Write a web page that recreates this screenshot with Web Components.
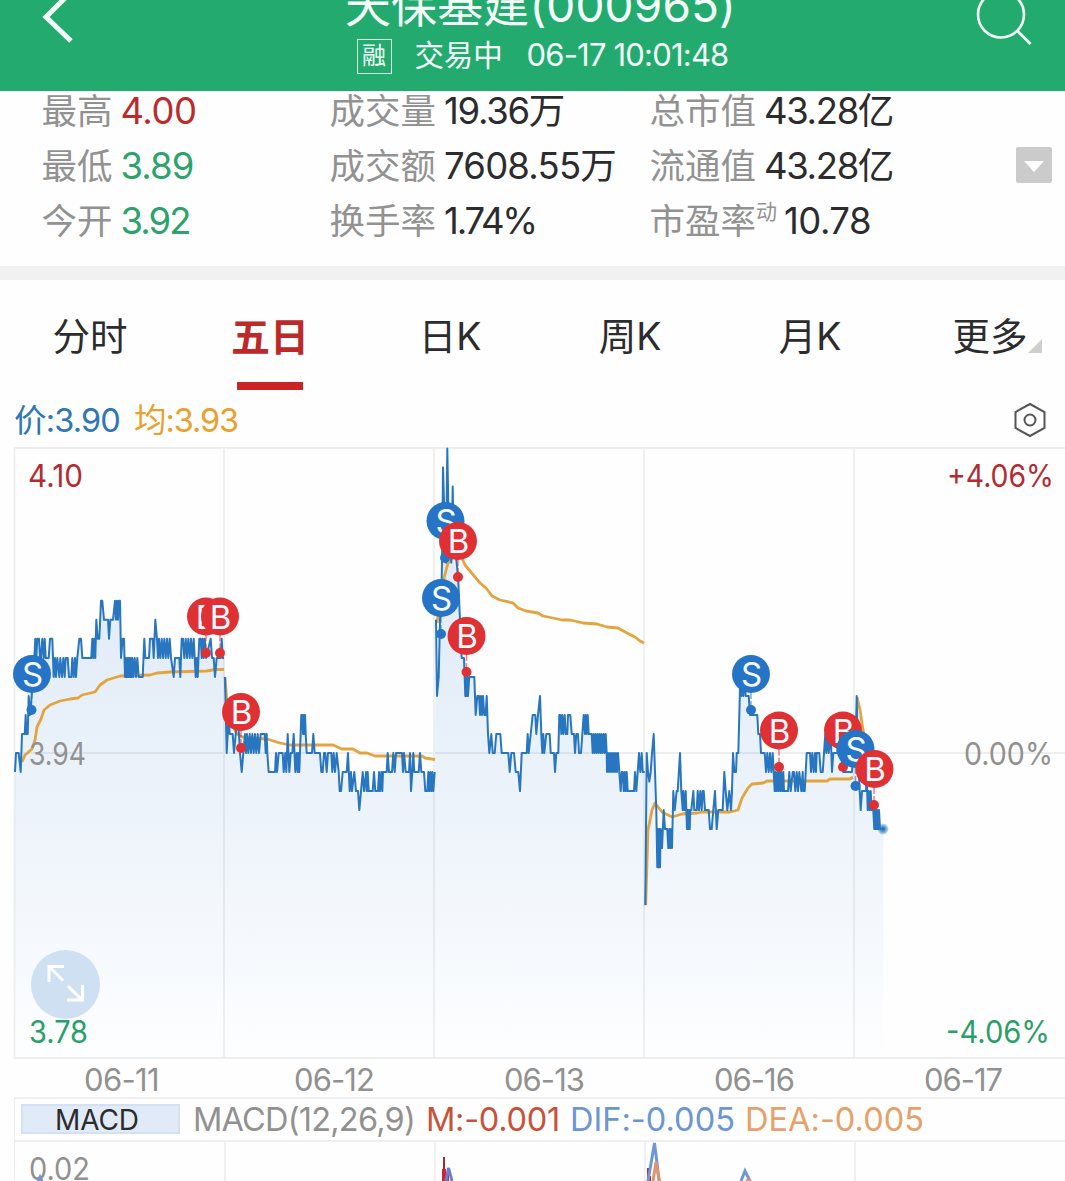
<!DOCTYPE html>
<html lang="zh-CN">
<head>
<meta charset="utf-8">
<title>天保基建(000965)</title>
<style>
    body {
        margin: 0;
        width: 1065px;
        height: 1181px;
        overflow: hidden;
        background: #fefefe;
        color: #2c2c2e;
        font-family: Inter, "Noto Sans CJK SC", sans-serif;
    }
</style>
</head>
<body>
<stock-page></stock-page>

<script>
/* a run of text, tracked so that it fills the given width */
class TrackText extends HTMLElement {
    constructor() {
        super();
        this.attachShadow({mode: "open"}).innerHTML =
            "<style>:host { display: inline-block; white-space: pre; }</style><slot></slot>";
    }

    connectedCallback() {
        const width = Number(this.getAttribute("w"));
        const count = [...this.textContent].length;
        if (!width || !count) return;
        const range = document.createRange();
        range.selectNodeContents(this);
        const natural = range.getBoundingClientRect().width;
        if (natural) this.style.letterSpacing = (width - natural) / count + "px";
    }
}
customElements.define("track-text", TrackText);

class StockHeader extends HTMLElement {
    constructor() {
        super();
        this.attachShadow({mode: "open"}).innerHTML = `
        <style>
            :host {
                display: grid;
                grid-template-columns: 100px 1fr 84px;
                height: 91px;
                background: #23ab6f;
                color: #f4fff9;
                overflow: hidden;
            }
            .middle { display: flex; flex-direction: column; align-items: center; }
            .title { margin-top: -18px; font-size: 46px; line-height: 46px; }
            .status {
                display: flex;
                margin: 9px 0 0 4px;
                font-size: 31px;
                line-height: 36px;
            }
            .badge {
                box-sizing: border-box;
                width: 35px;
                height: 35px;
                margin: 2px 23px 0 0;
                border: 1.5px solid #e2f7ec;
                font-size: 24px;
                line-height: 32px;
                text-align: center;
            }
            .state { margin-right: 24px; font-size: 29.5px; }
            svg { display: block; fill: none; stroke: #f4fff9; overflow: visible; }
        </style>
        <svg width="100" height="91"><path d="M71 -8L46 17L71 41" stroke-width="5"/></svg>
        <div class="middle">
            <track-text class="title" w="391">天保基建(000965)</track-text>
            <div class="status">
                <span class="badge">融</span>
                <track-text class="state" w="88">交易中</track-text>
                <track-text w="202">06-17 10:01:48</track-text>
            </div>
        </div>
        <svg width="84" height="91" stroke-width="2.6"><circle cx="20" cy="14.5" r="23"/><path d="M36 30.500L49.500 44"/></svg>`;
    }
}
customElements.define("stock-header", StockHeader);

class StatItem extends HTMLElement {
    constructor() {
        super();
        this.attachShadow({mode: "open"});
    }

    connectedCallback() {
        const attr = name => this.getAttribute(name) || "";
        this.shadowRoot.innerHTML = `
        <style>
            :host { display: flex; font-size: 36.5px; line-height: 41px; white-space: nowrap; }
            .label { color: #929292; font-size: 35.5px; }
            .value { margin-left: 8px; color: var(--stat-color, #2c2c2e); }
            .mark { color: #929292; font-size: 21px; line-height: 21px; }
            .mark + .value { margin-left: 7px; }
        </style>
        <span class="label">${attr("label")}</span>
        ${attr("mark") && `<span class="mark">${attr("mark")}</span>`}
        <track-text class="value" w="${attr("w")}">${attr("value")}</track-text>`;
    }
}
customElements.define("stat-item", StatItem);

class StatPanel extends HTMLElement {
    constructor() {
        super();
        this.attachShadow({mode: "open"}).innerHTML = `
        <style>
            :host {
                display: flex;
                align-items: flex-start;
                height: 175px;
                border-bottom: 14px solid #f1f1f1;
            }
            .grid {
                display: grid;
                grid-template-columns: 288px 320px 366px;
                row-gap: 14px;
                margin-left: 41.5px;
            }
            .up { --stat-color: #bb2b2b; }
            .down { --stat-color: #2ca36c; }
            svg { display: block; margin-top: 56px; }
        </style>
        <div class="grid">
            <stat-item class="up" label="最高" value="4.00" w="76"></stat-item>
            <stat-item label="成交量" value="19.36万" w="120"></stat-item>
            <stat-item label="总市值" value="43.28亿" w="129"></stat-item>
            <stat-item class="down" label="最低" value="3.89" w="73"></stat-item>
            <stat-item label="成交额" value="7608.55万" w="172"></stat-item>
            <stat-item label="流通值" value="43.28亿" w="129"></stat-item>
            <stat-item class="down" label="今开" value="3.92" w="69"></stat-item>
            <stat-item label="换手率" value="1.74%" w="92"></stat-item>
            <stat-item label="市盈率" mark="动" value="10.78" w="87"></stat-item>
        </div>
        <svg width="36" height="36"><rect width="36" height="36" rx="2" fill="#cbcbcb"/><path d="M8 14H28L18 25Z" fill="#fff"/></svg>`;
    }
}
customElements.define("stat-panel", StatPanel);

class TabItem extends HTMLElement {
    constructor() {
        super();
        this.attachShadow({mode: "open"}).innerHTML = `
        <style>
            :host {
                display: flex;
                flex: 0 0 180px;
                flex-direction: column;
                align-items: center;
                height: 110px;
                font-size: 37.5px;
                line-height: 44px;
                padding-top: 35px;
                box-sizing: border-box;
            }
            :host([active]) { color: #bd2929; font-weight: bold; font-size: 39px; }
            .bar { width: 66px; height: 8px; margin-top: 23px; }
            :host([active]) .bar { background: #cb2427; }
            .text { display: flex; }
            svg { display: none; width: 14px; height: 14px; margin: 24px -14px 0 0; }
            :host([more]) svg { display: block; }
        </style>
        <div class="text"><slot></slot><svg><path d="M14 0V14H0Z" fill="#cfcfcf"/></svg></div>
        <div class="bar"></div>`;
    }
}
customElements.define("tab-item", TabItem);

class TabBar extends HTMLElement {
    constructor() {
        super();
        this.attachShadow({mode: "open"}).innerHTML = `
        <style>
            :host { display: flex; overflow: hidden; }
        </style><slot></slot>`;
    }
}
customElements.define("tab-bar", TabBar);

class PriceLegend extends HTMLElement {
    constructor() {
        super();
        this.attachShadow({mode: "open"}).innerHTML = `
        <style>
            :host {
                display: flex;
                height: 57px;
                box-sizing: border-box;
                padding: 10px 19px 0 14px;
                font-size: 32.5px;
                line-height: 42px;
            }
            .price { color: #2f76b5; }
            .average { color: #e9a02c; margin-left: 14px; }
            svg { margin: 2px 0 0 auto; fill: none; stroke: #555; stroke-width: 2; }
        </style>
        <track-text class="price" w="106">价:3.90</track-text>
        <track-text class="average" w="104">均:3.93</track-text>
        <svg width="32" height="36"><path d="M16 2L30.500 10V26L16 34L1.500 26V10Z"/><circle cx="16" cy="18" r="5.500"/></svg>`;
    }
}
customElements.define("price-legend", PriceLegend);

/* Each run is a list of x,level pairs; x is in thirds of a pixel from the
   run's start, level is in cents above 3.94. "x~end,high,low,step" swings. */
const PRICE_RUNS = [
    [0, `45,-1 48,0 56,0 62,-1 66,1 74,1 77,2 79,1 83,1 86,3 90,2 95,3 98,4 103,5 106,6 109,5 112,6 117,6 120,5 123,5
        127,6 131,5 134,6 137,5 146,5 150,6 157,6 161,4 165,5 168,4 172,5 178,4 181,5 186,4 190,5 194,4 197,5 203,5
        207,4 214,4 217,5 221,4 225,5 228,4 232,5 238,6 243,6 247,5 274,5 277,6 280,5 283,6 286,5 289,7 293,6 298,6 303,8
        307,8 312,7 324,7 327,6 331,7 339,7 345,8 348,7 351,8 354,7 357,8 360,8 363,5 368,6 372,6 375,4
        377~397,5,4,2 400,4 404,5 408,4 412,5 416,4 428,4 433,6 436,5 447,5 450,6 458,6 461,5 466,7 471,6 474,5
        477~516,6,5,4 521,4 525,5 538,5 541,4 545,6 549~584,6,5,4 587,4 590,5 593,4 598,6 602~614,6,5,3 618,5 632,6 636,5
        641,5 645,4 650,5 662,5 665,6 668,5 672,5`],
    [660, `15,4 20,0 26,2 29,1 38,1 42,0 47,1 52,2 57,1 60,0 65,-1 70,0 75,1 78,0 81~120,1,0,4 122,1 134,1 137,0 140,1
        142,0 146,-1 165,-1 168,0 171,-1 176,0 188,0 191,-1 196,0 199,-1 203,1 208,-1 212,0 217,0 221,1 226,-1 230,0 233,-1
        235,0 238,-1 244,2 247~258,2,1,2 260,0 276,0 280,1 284,0 300,0 304,-1 308,-1 312,0 316,0 320,-1 324,0 334,0 337,-1
        341,0 345,-1 350,0 356,-1 359,-2 363,-2 368,-1 380,-1 384,0 389,-2 393,-1 396,-2 403,-1 408,-2 414,-2 418,-3
        423,-2 428,-1 432,-2 438,-1 440,-2 443,-1 446,-2 458,-2 462,-1 466,-2 474,-2 477,-1 480,-2 484,-1 487,-2
        489,-1 500,-1 503,0 507,-1 516,-1 520,0 524,-1 528,0 546,0 549,-1 552,0 557,-1 567,-1 570,0 573,-2 577,-1
        580,0 583,-1 596,-1 600,0 604,-1 612,-1 616,-2 622,-2 625~641,-1,-2,3 644,-1`],
    [1230, `78,7 81,3 86,4 90,7 94,8 97,11 99,15 104,12 108,10 112,16 116,12 120,11 124,10 128,14 131,11 140,10
        145,9 150,7 155,5 162,5 166,3 168,4 170,3 172,4 174,3 178,4 193,4 197,2 202,3 207,3 210,2 213,3 216,2 219,3
        223,2 227,2 230,3 234,1 238,0 244,1 248,0 254,0
        259,1 271,1 275,0 295,0 299,-1 304,0 312,0 317,-1 325,-1 330,-2 335,0 350,0 353,1 356,0 362,1 368,2 376,2
        379,1 384,2 390,3 394,1 397,0 400,1 403,0 409,1 419,1 422,0 432,0 435,-1 439,0 445,0 448,2 451~462,2,1,3
        464,2 467,1 472,1 474,2 481,2 485,1 492,1 495,0 499,1 504,1 507,0 513,0 521,2 525,1 527,2 530,1 533,2
        536,1 543,1 545~590,1,0,3 591,-1 594~624,0,-1,3 628,-1 632,-2 635,-1 638~654,-1,-2,3 656,-2 672,-2 675,-1
        679,-2 683,-1 687,0 691,-1 695,0 698,-1 704,-1`],
    [1890, `46,-8 50,0 54,-1 58,-1.5 62,-1 66,0 71,1 75,-1 79,-3 82,-6 84,-4 86,-6 88,-4 90,-6 92,-4 96,-5 101,-3
        105,-4 112,-4 115,-5 118,-4 121,-5 123,-4 126,-5 130,-2 134,-3 140,-2 143,-2 150,0 154,-2 158,-3 160,-2 164,-3
        167,-2 171,-4 173~182,-3,-4,2 184,-3 190,-2 193,-3 200,-3 203,-2 207,-3 211,-2 215,-3 218,-2 221,-2 225,-3
        236,-3 240,-4 245,-4 250,-3 255,-2 260,-4 265,-3 278,-3 283,-1 287,-2 292,-3 298,-2 303,-3 306,-2 309,0
        313,-1 318,-1 320,0 325,0 331,4 334,3 337,4 340,3 343,4 347,3 356,3 360,2 382,2 385,1 390,1 393,0 402,0
        404~430,0,-1,4 434,-2 436~460,-1,-2,3 462,-2 474,-2 478,-1 482,-2 488,-1 492~510,-1,-2,4 514,-2 518,-1
        520,-2 524,-2 530,0 540,0 543,-1 547,0 551,-1 555,0 558,-1 560,0 568,0 572,-1 578,-1 582,0 586,1 589,0
        593,1 596,0 602,1 606,-1 610,0 622,0 626,1 632,0 640,-1 650,-1 666,-1 670,0 676,0 680,3 684,0 689,-2 692,-3
        696,-2 708,-2 710,-1 713,-3 716,-2 719,-3 722,-2 725,-3 730,-3 733,-4 735~748,-3,-4,2 750,-4 760,-4`]
];

const AVERAGES = [
    "22,762 25,755 32,749 35,740 37,727 41,719 44,710 50,705 60,701 70,699 78,698 82,695 95,692 100,685 107,680 120,676 150,675 157,673 170,672 207,671 215,669.5 224,669.5",
    "225,677 228,717 237,734 242,737 253,738 267,739 280,743 290,745 333,745 342,749 353,749 360,753 367,753 375,756 422,756 425,758 435,759.5",
    "437,623 440,600 444,578 448,563 455,555 462,558 465,565 470,571 475,577 480,583 486,588 492,596 500,600 513,603 518,608 526,611 538,613 543,616 553,618 562,620 570,620 583,623 597,624 607,627 618,628 627,633 635,637 640,641 644,643",
    "645.700,905 648,830 652,810 655,803 662,812 672,817 682,814 697,813 702,812 730,812 738,810 742,798 748,788 752,784 763,783 767,781 827,781 830,779 850,779 853,777",
    "857,697 860,710 863,730 868,747"
];

/* letter, x, y of the bubble, x and y of its point on the line */
const TRADES = [
    ["S", 32, 674, 31.5, 710], ["B", 206, 616.5, 206, 653], ["B", 220, 616.5, 220, 653],
    ["B", 241, 712, 241, 748], ["S", 445.5, 521, 445, 558], ["S", 441, 598, 441, 634],
    ["B", 458, 541, 458, 577], ["B", 466.5, 636, 466.5, 672], ["S", 751, 674, 751, 710],
    ["B", 779, 730.5, 779, 767], ["B", 843, 730.5, 843, 767], ["S", 855.5, 749, 855.5, 786],
    ["B", 874.5, 769, 874, 805]
];

class PriceChart extends HTMLElement {
    constructor() {
        super();
        this.attachShadow({mode: "open"});
    }

    points([start, run]) {
        const out = [];
        const add = (x, level) => out.push(((start + x) / 3).toFixed(1) + "," + (753 - level * 19.03).toFixed(1));
        for (const item of run.trim().split(/\s+/)) {
            const [x, level, low, step] = item.split(",");
            if (!x.includes("~")) {
                add(Number(x), Number(level));
                continue;
            }
            const [from, to] = x.split("~").map(Number);
            let high = true;
            for (let at = from; at <= to; at += Number(step)) {
                add(at, Number(high ? level : low));
                high = !high;
            }
        }
        return out.join(" ");
    }

    connectedCallback() {
        const lines = PRICE_RUNS.map(run => this.points(run));
        const label = (text, x, y, width, cls) =>
            `<text class="${cls}" x="${x}" y="${y}" textLength="${width}" lengthAdjust="spacingAndGlyphs">${text}</text>`;
        this.shadowRoot.innerHTML = `
        <style>
            :host { display: block; height: 612px; }
            svg { display: block; font-size: 30.5px; }
            .grid { stroke: #5a6470; stroke-opacity: .1; stroke-width: 1.8; fill: none; }
            .up { fill: #b32b30; }
            .down { fill: #2a9f69; }
            .flat { fill: #919191; }
            .line { fill: none; stroke: #2776bf; stroke-width: 2; stroke-linejoin: round; }
            .average { fill: none; stroke: #e3a43d; stroke-width: 2.8; stroke-linejoin: round; }
            .bubble { fill: #f5faff; font-size: 33px; text-anchor: middle; }
        </style>
        <svg width="1065" height="612" viewBox="0 447 1065 612">
            <defs>
                <linearGradient id="fade" gradientUnits="userSpaceOnUse" x1="0" y1="448" x2="0" y2="1058">
                    <stop offset="0" stop-color="#dbe8f5"/>
                    <stop offset=".55" stop-color="#ebf2fa"/>
                    <stop offset="1" stop-color="#fdfeff"/>
                </linearGradient>
                <radialGradient id="glow">
                    <stop offset=".2" stop-color="#2776bf"/>
                    <stop offset="1" stop-color="#2776bf" stop-opacity=".2"/>
                </radialGradient>
            </defs>
            <polygon points="15,1057 ${lines.join(" ")} 883.300,1057" fill="url(#fade)"/>
            <path class="grid" d="M14 448H1065M14 753H1065M14 1058H1065M14.500 448V1058M224 448V1058M434 448V1058M644 448V1058M854 448V1058"/>
            ${AVERAGES.map(p => `<polyline class="average" points="${p}"/>`).join("")}
            ${lines.map(p => `<polyline class="line" points="${p}"/>`).join("")}
            <circle cx="883" cy="829" r="5.500" fill="url(#glow)"/>
            ${TRADES.map(([letter, x, y, px, py]) => {
                const color = letter === "S" ? "#2674c6" : "#df3134";
                return `<path d="M${px} ${y + 18}V${py}" stroke="${color}" stroke-opacity=".6" stroke-width="1.500" stroke-dasharray="7 2"/>
                <circle cx="${px}" cy="${py}" r="5" fill="${color}"/>
                <circle cx="${x}" cy="${y}" r="19" fill="${color}"/>
                <text class="bubble" x="${x + .5}" y="${y + 12}">${letter}</text>`;
            }).join("")}
            <circle cx="65.500" cy="984.500" r="34.500" fill="#cfe0f2"/>
            <path d="M64 966.500H49V982M49 966.500L63 980.500M68 986L82 1000M82.500 985V1000H67" fill="none" stroke="#fff" stroke-width="3"/>
            ${label("4.10", 28, 487, 55, "up")}
            ${label("+4.06%", 947, 487, 107, "up")}
            ${label("3.94", 29, 765, 57, "flat")}
            ${label("0.00%", 964, 765, 89, "flat")}
            ${label("3.78", 29, 1043, 59, "down")}
            ${label("-4.06%", 946, 1043, 104, "down")}
        </svg>`;
    }
}
customElements.define("price-chart", PriceChart);

class DateAxis extends HTMLElement {
    constructor() {
        super();
        this.attachShadow({mode: "open"}).innerHTML = `
        <style>
            :host {
                display: grid;
                grid-template-columns: repeat(5, 210px);
                justify-items: start;
                height: 38px;
                margin-left: 14px;
                overflow: hidden;
                color: #919191;
                font-size: 31px;
                line-height: 41px;
            }
            track-text { margin-left: 70px; }
        </style>
        <track-text w="75">06-11</track-text>
        <track-text w="80">06-12</track-text>
        <track-text w="80">06-13</track-text>
        <track-text w="80">06-16</track-text>
        <track-text w="78">06-17</track-text>`;
    }
}
customElements.define("date-axis", DateAxis);

class MacdPanel extends HTMLElement {
    constructor() {
        super();
        this.attachShadow({mode: "open"}).innerHTML = `
        <style>
            :host {
                display: block;
                margin-left: 14px;
                border-left: 1.5px solid #efefef;
            }
            .row {
                display: flex;
                box-sizing: border-box;
                height: 45px;
                border: solid #efefef;
                border-width: 2px 0;
                font-size: 32.5px;
                line-height: 41px;
            }
            .name {
                box-sizing: border-box;
                width: 159px;
                height: 30px;
                margin: 5px 13px 0 6px;
                border: 2px solid #d3e1f4;
                background: #e1ebf7;
                font-size: 28px;
                line-height: 28px;
                padding-left: 32px;
            }
            .params { color: #919191; margin-right: 11px; }
            .m { color: #c85239; margin-right: 10px; }
            .dif { color: #6c96d2; margin-right: 10px; }
            .dea { color: #e6a06a; }
            svg { display: block; font-size: 30.5px; margin-left: -1px; }
            .curve { fill: none; stroke-width: 3; }
        </style>
        <div class="row">
            <span class="name"><track-text w="84">MACD</track-text></span>
            <track-text class="params" w="222">MACD(12,26,9)</track-text>
            <track-text class="m" w="134">M:-0.001</track-text>
            <track-text class="dif" w="165">DIF:-0.005</track-text>
            <track-text class="dea" w="179">DEA:-0.005</track-text>
        </div>
        <svg width="1051" height="39" viewBox="14 1142 1051 39">
            <path d="M225 1142V1181M435 1142V1181M645 1142V1181M855 1142V1181" stroke="#efefef" stroke-width="1.800"/>
            <text x="29" y="1180" fill="#919191" textLength="61" lengthAdjust="spacingAndGlyphs">0.02</text>
            <path class="curve" d="M38 1181L40 1177L42 1181" stroke="#7893c5"/>
            <path d="M444 1157V1181" stroke="#a32836" stroke-width="2"/>
            <path d="M442 1169H446V1175H449V1181H442Z" fill="#cc2633"/>
            <path class="curve" d="M446 1181L448.500 1168L452 1181" stroke="#6a7fd0"/>
            <path d="M647 1181V1168H649V1176H651V1181Z" fill="#b12845"/>
            <path class="curve" d="M648 1181L654.500 1143L657 1163L659 1181" stroke="#6e97d8"/>
            <path class="curve" d="M653 1181L656 1162L659.500 1181" stroke="#df956b"/>
            <path class="curve" d="M741 1181L745 1171L750 1181" stroke="#6e97d8"/>
            <path class="curve" d="M746 1181L749 1180L751 1181" stroke="#df956b"/>
        </svg>`;
    }
}
customElements.define("macd-panel", MacdPanel);

class StockPage extends HTMLElement {
    constructor() {
        super();
        this.attachShadow({mode: "open"}).innerHTML = `
        <style>
            :host { display: flex; flex-direction: column; }
        </style>
        <stock-header></stock-header>
        <stat-panel></stat-panel>
        <tab-bar>
            <tab-item>分时</tab-item>
            <tab-item active>五日</tab-item>
            <tab-item>日K</tab-item>
            <tab-item>周K</tab-item>
            <tab-item>月K</tab-item>
            <tab-item more>更多</tab-item>
        </tab-bar>
        <price-legend></price-legend>
        <price-chart></price-chart>
        <date-axis></date-axis>
        <macd-panel></macd-panel>`;
    }
}
customElements.define("stock-page", StockPage);
</script>
</body>
</html>
